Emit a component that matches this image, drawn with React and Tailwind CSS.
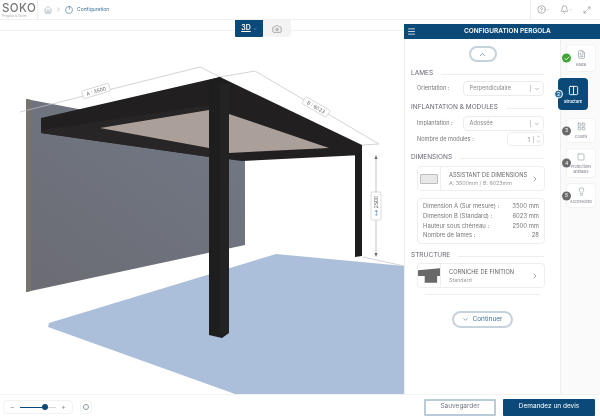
import { Bell, Camera, Check, ChevronDown, ChevronRight, ChevronUp, CircleHelp, Columns2, FileText, Home, LayoutGrid, Lightbulb, Maximize2, Menu, Square } from 'lucide-react';

const Scene = () => (
  <svg viewBox="0 37 404 357" className="w-[404px] h-[357px] block">
    <defs>
      <linearGradient id="wall" x1="1" y1="0" x2="0.2" y2="1">
        <stop offset="0" stopColor="#717987" />
        <stop offset="1" stopColor="#6c6d74" />
      </linearGradient>
    </defs>
    {/* floor */}
    <polygon points="49,323 276,254 404,266 404,394 235,394 48,327" fill="#abbfda" />
    {/* wall */}
    <polygon points="26,99 245,141 245,245 26,292" fill="url(#wall)" />
    <polygon points="26,99 31,100 31,291 26,292" fill="#77746f" />
    {/* dimension lines */}
    <g fill="none" stroke="#c2c2c2" strokeWidth="0.7">
      <path d="M20,112 L200,67 L220,77 L255,71 L379,144 L362,145" />
      <path d="M363,257 L404,266" />
    </g>
    <path d="M376,157 V255" stroke="#888" strokeWidth="0.5" fill="none" />
    <path d="M376,155 l-1.5,4 h3 z M376,257 l-1.5,-4 h3 z" fill="#666" />
    {/* roof */}
    <polygon points="220,77 362,145 362,155 242,161 210,157 41,133 41,118" fill="#211f20" />
    <polygon points="41,133 41,130 209,105 209,110 100,128 209,148 209,157" fill="#272525" />
    <polygon points="100,128 209,110 209,148" fill="#ab9f9a" />
    <polygon points="229,114 329,148 229,153" fill="#ab9f9a" />
    {/* posts */}
    <polygon points="209,80 220,77 229,84 229,333 222,338 209,335" fill="#1e1e1f" />
    <rect x="220" y="84" width="9" height="249" fill="#232324" />
    <polygon points="355,155 362,153 362,256 355,257" fill="#1d1d1e" />
    {/* dimension labels */}
    <g transform="translate(96 91) rotate(-17)">
      <rect x="-14" y="-4" width="28" height="8" rx="1" fill="#fff" stroke="#c4c4c4" strokeWidth="0.6" />
      <text x="0" y="2" textAnchor="middle" fontSize="5" fill="#666" fontFamily="Inter, sans-serif">A : 3500</text>
    </g>
    <g transform="translate(316 107) rotate(30)">
      <rect x="-14" y="-4" width="28" height="8" rx="1" fill="#fff" stroke="#c4c4c4" strokeWidth="0.6" />
      <text x="0" y="2" textAnchor="middle" fontSize="5" fill="#666" fontFamily="Inter, sans-serif">B : 6023</text>
    </g>
    <g transform="translate(376 206) rotate(-90)">
      <rect x="-14" y="-5" width="28" height="10" rx="1" fill="#fff" stroke="#c4c4c4" strokeWidth="0.6" />
      <text x="0" y="2" textAnchor="middle" fontSize="5" fill="#555" fontFamily="Inter, sans-serif">
        <tspan fill="#2b6ca3">↔ </tspan>2500
      </text>
    </g>
  </svg>
);

const SectionTitle = ({ children }) => (
  <div className="flex items-center gap-2 pl-[6px] pr-4 h-[12px]">
    <span className="text-[6.5px] text-[#667] whitespace-nowrap">{children}</span>
    <div className="flex-1 h-px bg-[#eeeeee]" />
  </div>
);

const SelectRow = ({ label, value }) => (
  <div className="flex items-center pl-[12px] pr-4 h-[15px]">
    <span className="w-[46px] text-[5.6px] text-[#777] whitespace-nowrap">{label}</span>
    <div className="w-[82px] h-[15px] flex items-center border border-[#ececec] rounded-sm pl-[6px] text-[5.6px] text-[#888]">
      <span className="flex-1">{value}</span>
      <span className="w-px h-[7px] bg-[#ccc]" />
      <ChevronDown size={6} className="mx-[3px] text-[#777]" />
    </div>
  </div>
);

const InfoCard = ({ icon, title, sub }) => (
  <div className="mx-[12px] w-[128px] h-[25px] flex items-center border border-[#eeeeee] rounded-sm">
    <div className="w-[23px] h-full flex items-center justify-center border-r border-[#eeeeee] shrink-0">{icon}</div>
    <div className="flex-1 pl-2 leading-[8px]">
      <div className="text-[5.7px] text-[#666] whitespace-nowrap">{title}</div>
      <div className="text-[5.3px] text-[#999] whitespace-nowrap">{sub}</div>
    </div>
    <ChevronRight size={8} className="mr-[5px] text-[#777]" />
  </div>
);

const DimRow = ({ label, value }) => (
  <div className="flex justify-between h-[9.6px] items-center text-[5.9px] text-[#777] whitespace-nowrap">
    <span>{label}</span>
    <span>{value}</span>
  </div>
);

const StepBadge = ({ n }) => (
  <span className="absolute -left-[5px] top-1/2 -translate-y-1/2 w-[9px] h-[9px] rounded-full bg-[#6a6a6a] text-white text-[5px] flex items-center justify-center">
    {n}
  </span>
);

const StepCard = ({ n, label, icon, className }) => (
  <div className={`relative ml-[5px] mr-[4px] bg-white border border-[#f2f2f2] rounded-sm flex flex-col items-center justify-center gap-[3px] ${className}`}>
    <StepBadge n={n} />
    {icon}
    <span className="text-[3.8px] leading-[5px] text-center text-[#778]">{label}</span>
  </div>
);

const App = () => {
  return (
    <div className="w-[600px] h-[420px] flex flex-col bg-white overflow-hidden font-['Inter',sans-serif] blur-[0.5px]">
      {/* Top bar */}
      <div className="h-5 flex items-center border-b border-[#f0f0f0] shrink-0">
        <div className="w-[38px] h-full border-r border-[#eeeeee] pl-[2px] flex flex-col justify-center">
          <div className="text-[11.5px] leading-[12px] tracking-[0.4px] font-medium text-[#777]">SOKO</div>
          <div className="text-[3px] leading-[4px] text-[#aaa] whitespace-nowrap">Pergolas & Stores</div>
        </div>
        <Home size={8} className="ml-[6px] text-[#9aa5af]" />
        <ChevronRight size={7} className="ml-[3px] text-[#9aa5af]" />
        <span className="ml-[3px] w-[8px] h-[8px] rounded-full border border-[#8fa8bc] text-[4.5px] text-[#2d6690] flex items-center justify-center">1</span>
        <span className="ml-[4px] text-[5px] text-[#3d7199]">Configuration</span>
        <div className="ml-auto w-[70px] h-full border-l border-[#eeeeee] flex items-center text-[#999]">
          <CircleHelp size={9} className="ml-[6px]" />
          <ChevronDown size={4} />
          <Bell size={9} className="ml-[10px]" />
          <ChevronDown size={4} />
          <Maximize2 size={8} className="ml-[10px]" />
        </div>
      </div>

      {/* Body */}
      <div className="flex-1 flex min-h-0">
        <div className="w-[404px] shrink-0">
          <div className="h-[17px] flex">
            <div className="flex-1 h-[11px] border-b border-[#f0f0f0]" />
            <div className="w-[28px] h-[17px] bg-[#0b4a78] rounded-b-[1px] text-white text-[7px] font-semibold flex items-center justify-center gap-[2px]">
              <span className="underline">3D</span>
              <ChevronDown size={4} />
            </div>
            <div className="w-[28px] h-[17px] bg-[#f3f3f3] rounded-br-sm flex items-center justify-center">
              <Camera size={10} className="text-[#999]" />
            </div>
            <div className="w-[113px] h-[11px] border-b border-[#f0f0f0]" />
          </div>
          <Scene />
        </div>

        <div className="flex-1 pt-1 flex flex-col min-w-0">
          <div className="h-[15px] bg-[#0b4a78] flex items-center text-white shrink-0">
            <Menu size={9} className="ml-[3px]" />
            <span className="ml-[48px] text-[6.5px] font-semibold whitespace-nowrap">CONFIGURATION PERGOLA</span>
          </div>
          <div className="flex-1 flex min-h-0">
            {/* Config form */}
            <div className="w-[157px] border-l border-r border-[#eeeeee] flex flex-col">
              <button className="mt-[7px] mx-auto w-[28px] h-[16px] rounded-full border-2 border-[#c6d3dc] flex items-center justify-center text-[#6b8ba3]">
                <ChevronUp size={9} />
              </button>
              <div className="mt-[6px]"><SectionTitle>LAMES</SectionTitle></div>
              <div className="mt-[1px]"><SelectRow label="Orientation :" value="Perpendiculaire" /></div>
              <div className="mt-[6px]"><SectionTitle>INFLANTATION & MODULES</SectionTitle></div>
              <div className="mt-[2px]"><SelectRow label="Implantation :" value="Adossée" /></div>
              <div className="flex items-center pl-[12px] pr-4 h-[14px] mt-[1px]">
                <span className="flex-1 text-[5.6px] text-[#777]">Nombre de modules :</span>
                <div className="w-[37px] h-[14px] flex items-center justify-end border border-[#ececec] rounded-sm text-[6px] text-[#888]">
                  <span className="mr-[3px]">1</span>
                  <span className="w-px h-[7px] bg-[#ccc]" />
                  <span className="mx-[2px] flex flex-col">
                    <ChevronUp size={5} />
                    <ChevronDown size={5} />
                  </span>
                </div>
              </div>
              <div className="mt-[6px]"><SectionTitle>DIMENSIONS</SectionTitle></div>
              <div className="mt-[2px]">
                <InfoCard
                  title="ASSISTANT DE DIMENSIONS"
                  sub="A: 3500mm / B: 6023mm"
                  icon={<div className="w-[18px] h-[10px] bg-[#e8e8e8] border border-[#bdbdbd] rounded-[1px]" />}
                />
              </div>
              <div className="mt-[7px] mx-[12px] w-[128px] h-[46px] border border-[#eeeeee] rounded-sm px-[5px] pt-[3px]">
                <DimRow label="Dimension A (Sur mesure) :" value="3500 mm" />
                <DimRow label="Dimension B (Standard) :" value="6023 mm" />
                <DimRow label="Hauteur sous chéneau :" value="2500 mm" />
                <DimRow label="Nombre de lames :" value="28" />
              </div>
              <div className="mt-[6px]"><SectionTitle>STRUCTURE</SectionTitle></div>
              <div className="mt-[1px]">
                <InfoCard
                  title="CORNICHE DE FINITION"
                  sub="Standard"
                  icon={
                    <svg width="23" height="18" viewBox="0 0 23 18">
                      <path d="M0 3 L23 1 V9 H20 V16 H7 V9 H0 Z" fill="#696969" />
                    </svg>
                  }
                />
              </div>
              <div className="mt-[6px] mx-[20px] h-px bg-[#eeeeee]" />
              <button className="mt-[16px] mx-auto w-[61px] h-[17px] rounded-full border-2 border-[#c6d3dc] flex items-center justify-center gap-[3px] text-[6.5px] text-[#3f7299]">
                <ChevronDown size={7} />
                Continuer
              </button>
            </div>

            {/* Steps rail */}
            <div className="flex-1 bg-[#fafafa] flex flex-col pt-[5px]">
              <div className="relative ml-[5px] mr-[4px] h-[28px] bg-white border border-[#f2f2f2] rounded-sm flex flex-col items-center justify-center gap-[3px]">
                <span className="absolute -left-[5px] top-1/2 -translate-y-1/2 w-[9px] h-[9px] rounded-full bg-[#3fa535] flex items-center justify-center">
                  <Check size={6} strokeWidth={4} className="text-white" />
                </span>
                <FileText size={9} className="text-[#98a4ae]" />
                <span className="text-[3.8px] leading-[5px] text-[#778]">Kalea</span>
              </div>
              <div className="relative mt-[6px] -ml-[3px] w-[30px] h-[32px] bg-[#0b4a78] rounded-sm flex flex-col items-center justify-center gap-[3px] text-white">
                <span className="absolute -left-[4px] top-1/2 -translate-y-1/2 w-[9px] h-[9px] rounded-full bg-[#2d6f9e] border border-white text-[5px] flex items-center justify-center">2</span>
                <Columns2 size={11} />
                <span className="text-[4px] leading-[5px] font-semibold">Structure</span>
              </div>
              <StepCard n="3" label="Coloris" className="mt-[8px] h-[25px]" icon={<LayoutGrid size={9} className="text-[#98a4ae]" />} />
              <StepCard n="4" label={<>Protections<br />latérales</>} className="mt-[5px] h-[30px]" icon={<Square size={8} className="text-[#98a4ae]" />} />
              <StepCard n="5" label="Accessoires" className="mt-[5px] h-[25px]" icon={<Lightbulb size={9} className="text-[#98a4ae]" />} />
            </div>
          </div>
        </div>
      </div>

      {/* Bottom bar */}
      <div className="h-[26px] shrink-0 bg-white border-t border-[#f3f3f3] flex items-center pl-[3px] pb-[1px]">
        <div className="w-[70px] h-[14px] border border-[#f2f2f2] rounded-sm flex items-center px-[6px] text-[#888] text-[7px]">
          <span>−</span>
          <div className="relative flex-1 mx-[5px] h-px bg-[#d8d8d8]">
            <div className="h-px w-[25px] bg-[#0b4a78]" />
            <span className="absolute left-[22px] -top-[2.5px] w-[6px] h-[6px] rounded-full bg-[#0b4a78]" />
          </div>
          <span>+</span>
        </div>
        <div className="ml-[7px] w-[12px] h-[14px] border border-[#f2f2f2] rounded-sm flex items-center justify-center">
          <span className="w-[6px] h-[6px] rounded-full border border-[#8a9aa6]" />
        </div>
        <button className="ml-auto w-[72px] h-[17px] border-2 border-[#b9ccd9] rounded-[1px] text-[6.5px] text-[#778]">Sauvegarder</button>
        <button className="ml-[7px] mr-[5px] w-[92px] h-[17px] bg-[#0b4a78] rounded-[1px] text-[6.5px] text-white">Demandez un devis</button>
      </div>
    </div>
  );
};

export default App;
